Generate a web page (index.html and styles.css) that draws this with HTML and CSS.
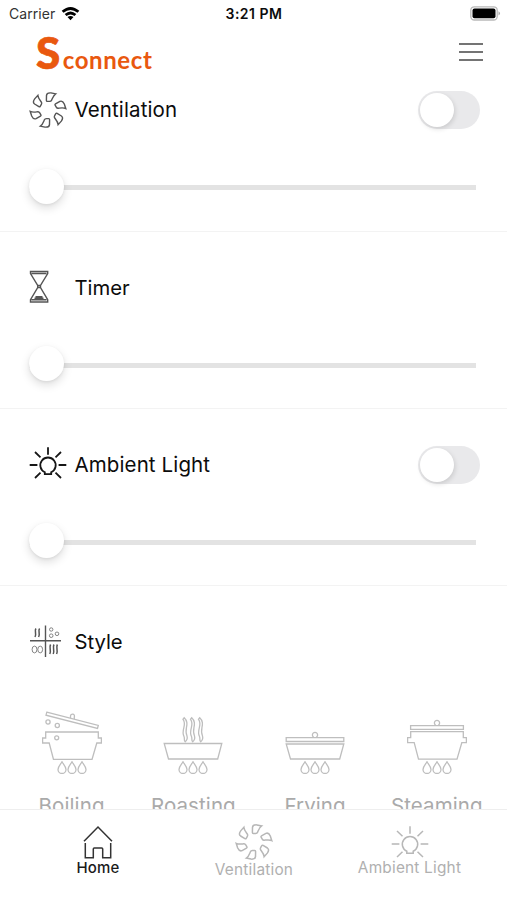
FILE: index.html
```html
<!DOCTYPE html>
<html lang="en">
<head>
<meta charset="utf-8">
<title>Sconnect</title>
<link rel="stylesheet" href="styles.css">
</head>
<body>
<svg class="defs" aria-hidden="true">
  <defs>
    <path id="blade" d="M-1.6-9.6L-1.5-14.6C-1.3-16.8 .8-17.3 3-17.1L7.6-16.1C5.4-14.6 4.7-12.4 3.6-9.8C3.2-8.8 2.5-8.6 1.6-8.6H-.7Q-1.6-8.6-1.6-9.6Z"/>
    <symbol id="fan" viewBox="-19 -19 38 38">
      <use href="#blade"/><use href="#blade" transform="rotate(60)"/><use href="#blade" transform="rotate(120)"/>
      <use href="#blade" transform="rotate(180)"/><use href="#blade" transform="rotate(240)"/><use href="#blade" transform="rotate(300)"/>
    </symbol>
    <symbol id="bulb" viewBox="-19 -19 38 38">
      <path d="M-3.2 7.2A7.7 7.7 0 1 1 3.2 7.2V9.2H-3.2ZM0-17.8V-10.3M-18.3 0H-10.6M10.6 0H18.3M-13-13L-7.5-7.7M13-13L7.5-7.7M-13 13L-7.5 7.7M13 13L7.5 7.7"/>
    </symbol>
    <path id="drop" d="M0 0C1.2 2.4 4 4.6 4 7.8A4 4 0 0 1-4 7.8C-4 4.6-1.2 2.4 0 0Z"/>
    <symbol id="flames" viewBox="0 0 30 13">
      <use href="#drop" x="5" y=".7"/><use href="#drop" x="15" y=".7"/><use href="#drop" x="25" y=".7"/>
    </symbol>
    <path id="pot" d="M3.7 32H56.3V38H59.4V43H54.8L50 59.5H11.5L7.2 43H.6V38H3.7Z"/>
  </defs>
</svg>
<div class="status">
  <div class="carrier">Carrier
    <svg width="19" height="15" viewBox="0 0 19 15"><path d="M.7 4.8Q9.5-3 18.3 4.8L16.5 6.8Q9.5 1 2.5 6.8ZM3.7 8Q9.5 3 15.3 8L13.5 10Q9.5 6.9 5.5 10ZM6.5 11.1Q9.5 8.7 12.5 11.1L9.5 14.2Z"/></svg>
  </div>
  <div class="time">3:21 PM</div>
  <svg class="battery" width="31" height="15" viewBox="0 0 31 15"><rect x=".8" y=".8" width="26.4" height="13.2" rx="3.5" fill="#fff" stroke="#b9b9b9" stroke-width="1.3"/><rect x="2.5" y="2.5" width="23" height="9.8" rx="2"/><path d="M28.5 5.2Q31.5 7.4 28.5 9.6Z" fill="#aaa"/></svg>
</div>
<header>
  <div class="logo"><span class="big">S</span><span class="rest">connect</span></div>
  <div class="menu"><i></i><i></i><i></i></div>
</header>
<main>
  <section class="first">
    <div class="row"><svg class="icon fan"><use href="#fan"/></svg><h2 class="wide">Ventilation</h2><div class="toggle"><i></i></div></div>
    <div class="slider"><i></i></div>
  </section>
  <section>
    <div class="row"><svg class="icon glass" viewBox="-19 -19 38 38"><path d="M-17.5-16.5H-.3V-14.5L-7.5-2.5V-.5L-.3 11.7V14H-17.5V11.7L-10.3-.5V-2.5L-17.5-14.5ZM-16.5-14.5H-1.5M-16.5 11.7H-1.5M-10.3-2.5H-7.5M-10.3-.5H-7.5M-12.5 8.7H-5.5M-13.5 10.2H-4.5"/></svg><h2>Timer</h2></div>
    <div class="slider"><i></i></div>
  </section>
  <section>
    <div class="row"><svg class="icon light"><use href="#bulb"/></svg><h2 class="wide">Ambient Light</h2><div class="toggle"><i></i></div></div>
    <div class="slider"><i></i></div>
  </section>
  <section class="styles">
    <div class="row"><svg class="icon mix" viewBox="-19 -18.5 38 38"><path class="axis" d="M-2.5-16V15.5M-18-.8H13"/><path class="wave" d="M-12-13C-14-10.5-11-8-13-4.5M-8.4-13C-10.4-10.5-7.4-8-9.4-4.5M2.6 3C.8 6 3.6 9 1.8 12.5M6 3C4.2 6 7 9 5.2 12.5M9.4 3C7.6 6 10.4 9 8.6 12.5"/><g class="thin"><circle cx="3.2" cy="-12" r="1.7"/><circle cx="9" cy="-7.7" r="1.8"/><circle cx="3.2" cy="-5.8" r="1.8"/><ellipse cx="-13.5" cy="8" rx="2.4" ry="3.4"/><ellipse cx="-7.8" cy="8" rx="2.4" ry="3.4"/></g></svg><h2>Style</h2></div>
    <div class="modes">
      <div class="mode">
        <svg class="pan" viewBox="0 0 60 60"><path d="M4.8 12.2L56.3 25.4L55.5 28.4L4 15.2Z"/><path d="M28.5 18V16A2 2 0 1 1 32.3 17V19"/><circle cx="6" cy="22" r="2.1"/><circle cx="15.3" cy="25.5" r="2.1"/><circle cx="14.7" cy="37.8" r="2"/><use href="#pot"/></svg>
        <svg class="flames"><use href="#flames"/></svg><p>Boiling</p>
      </div>
      <div class="mode">
        <svg class="pan" viewBox="0 0 60 60"><path d="M1.2 43.5H58.8L54.7 59H5.5Z"/><g><path id="steam" d="M21.2 17.8C27.5 23.5 20.5 29.2 24 36C24.7 38.5 23.8 40.5 22.2 41.8C20.5 40.5 22 38.5 21 36.5C17.5 30 24.5 25 20 19.3Z"/><use href="#steam" x="7.5"/><use href="#steam" x="15.5"/></g></svg>
        <svg class="flames"><use href="#flames"/></svg><p>Roasting</p>
      </div>
      <div class="mode">
        <svg class="pan" viewBox="0 0 60 60"><path d="M1.2 37.7H58.8V41.5H1.2ZM1.2 44H58.8L54.7 59H5.5ZM28.2 37.7V36.8A2.6 2.6 0 1 1 31.8 36.8V37.7"/></svg>
        <svg class="flames"><use href="#flames"/></svg><p>Frying</p>
      </div>
      <div class="mode">
        <svg class="pan" viewBox="0 0 60 60"><path d="M3.6 25.7H56.4V29.4H3.6ZM28.2 25.7V24.8A2.6 2.6 0 1 1 31.8 24.8V25.7"/><use href="#pot" y="-.3"/></svg>
        <svg class="flames"><use href="#flames"/></svg><p>Steaming</p>
      </div>
    </div>
  </section>
</main>
<nav>
  <div class="tab active"><svg width="30" height="34" viewBox="0 0 30 34"><path d="M1 16.2L15 2L29 16.2M2.3 18V32.8H10.3V24Q10.3 23 11.3 23H18.7Q19.7 23 19.7 24V32.8H27.7V18"/></svg><span>Home</span></div>
  <div class="tab mid"><svg width="38" height="38"><use href="#fan"/></svg><span>Ventilation</span></div>
  <div class="tab last"><svg width="38" height="38"><use href="#bulb"/></svg><span>Ambient Light</span></div>
</nav>
</body>
</html>
```

FILE: styles.css
```css
* { box-sizing: border-box; }
body {
  margin: 0;
  width: 507px;
  height: 900px;
  overflow: hidden;
  display: flex;
  flex-direction: column;
  background: #fff;
  color: #0c0c0c;
  font-family: Inter, "Liberation Sans", sans-serif;
}
h2, p { margin: 0; font-weight: 400; white-space: nowrap; }
svg { display: block; flex: none; }
.defs { position: absolute; width: 0; height: 0; }

.status {
  height: 27px;
  flex: none;
  display: grid;
  grid-template-columns: 1fr auto 1fr;
  align-items: center;
  padding: 0 6px 0 9px;
  font-size: 14px;
}
.carrier { display: flex; align-items: center; gap: 6px; color: #333; letter-spacing: .05px; }
.time { font-weight: 600; letter-spacing: .5px; margin-left: -2px; }
.battery { justify-self: end; }

header {
  height: 47px;
  flex: none;
  display: flex;
  justify-content: space-between;
  padding: 0 24px 0 36px;
}
.logo {
  height: 47px;
  display: flex;
  align-items: baseline;
  font-family: Lato, sans-serif;
  font-weight: 700;
  line-height: 50px;
  color: #e9580f;
}
.big { font-size: 44px; font-weight: 900; margin-right: 2.5px; -webkit-text-stroke: .7px #e9580f; }
.rest { font-size: 24px; letter-spacing: .6px; }
.menu { width: 24px; display: flex; flex-direction: column; gap: 6px; padding-top: 16px; }
.menu i { height: 2px; background: #747474; }

main { flex: 1; min-height: 0; overflow: hidden; }
section { height: 177.25px; padding: 36px 27px 0 29px; border-bottom: 1px solid #f3f3f3; }
.first { height: 157.5px; padding-top: 16px; }
.styles { height: 300px; border: 0; padding: 36px 0 0 29px; }
.row { height: 40px; display: flex; align-items: center; }
.icon { width: 38px; height: 38px; margin-right: 8px; fill: none; stroke: #555; stroke-width: 1.4; }
.icon.light { stroke: #161616; stroke-width: 1.8; }
.icon.mix { stroke-width: .8; }
.axis { stroke-width: 1.4; }
.wave { stroke-width: 1.5; }
.thin { stroke-width: .7; }
h2 { font-size: 20.3px; line-height: 28px; margin-left: -.6px; }
.wide { font-size: 20.5px; letter-spacing: .13px; }
.toggle {
  width: 62px;
  height: 38px;
  margin-left: auto;
  padding: 2px;
  border-radius: 19px;
  background: #e9e9eb;
}
.toggle i { display: block; width: 34px; height: 34px; border-radius: 50%; background: #fff; box-shadow: 1px 2px 5px #0002; }
.slider { width: 447px; height: 5px; margin-top: 55px; background: #e3e3e3; display: flex; align-items: center; }
.slider i { width: 35px; height: 35px; flex: none; margin-top: -3px; border-radius: 50%; background: #fff; box-shadow: 0 4px 10px #0002, 0 1px 3px #0001; }

.modes { width: 487px; margin: 38px 0 0 -18.3px; display: grid; grid-template-columns: repeat(4, 1fr); }
.mode { display: flex; flex-direction: column; align-items: center; color: #aaa; fill: none; stroke: #bebebe; stroke-width: 1.3; }
.pan { width: 60px; height: 60px; }
.flames { width: 30px; height: 13px; margin-top: 1px; }
.mode p { font-size: 20.5px; line-height: 28px; letter-spacing: .1px; margin-top: 18px; }

nav {
  height: 91px;
  flex: none;
  display: grid;
  grid-template-columns: 196px 116px 195px;
  border-top: 1px solid #eee;
}
.tab { display: flex; flex-direction: column; align-items: center; color: #b0b0b0; font-size: 15.4px; line-height: 20px; letter-spacing: .2px; white-space: nowrap; }
.tab svg { fill: none; stroke: #b7b7b7; stroke-width: 1.5; }
.active { color: #1b1b1b; padding-top: 15px; font-weight: 500; font-size: 15px; }
.active svg { stroke: #333; }
.active span { margin-top: -1px; }
.mid { padding-top: 13px; }
.mid span { margin-top: -1px; }
.last { padding-top: 15px; }
.last span { margin-top: -5px; }
```
